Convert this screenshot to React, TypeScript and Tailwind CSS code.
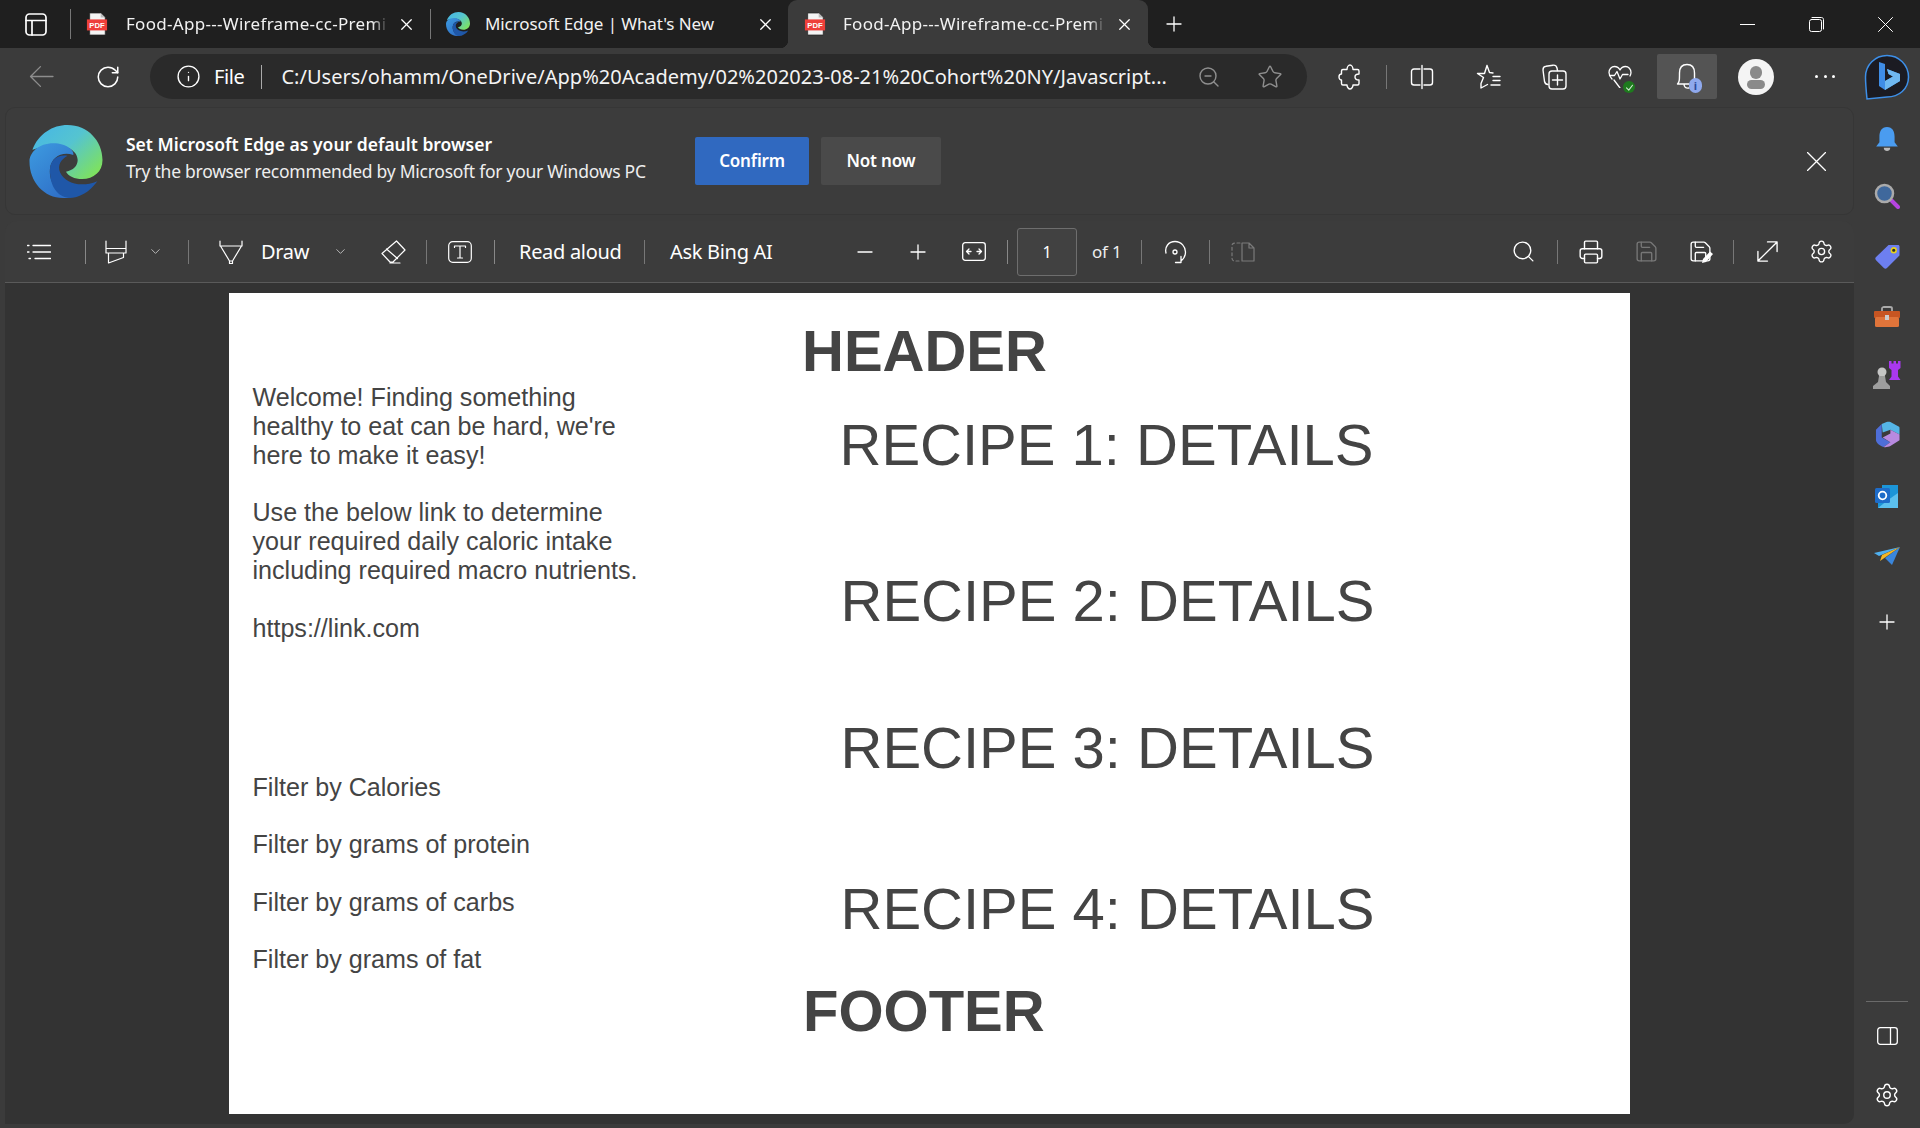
import React from "react";
import { Info, Minus, Plus, Printer, RotateCw, Save, Search, Settings, Star, X, ZoomOut, ChevronDown } from "lucide-react";

type P = { className?: string; children?: React.ReactNode; vb?: string; sw?: number };
const Svg = ({ className, children, vb = "0 0 24 24", sw = 1.4 }: P) => (
  <svg viewBox={vb} className={className} fill="none" stroke="currentColor" strokeWidth={sw} strokeLinecap="round" strokeLinejoin="round">
    {children}
  </svg>
);

const EdgeLogo = ({ className, id }: { className?: string; id: string }) => (
  <svg viewBox="0 0 100 100" className={className}>
    <defs>
      <linearGradient id={id + "a"} x1="0" y1="0" x2="1" y2="0.8">
        <stop offset="0" stopColor="#45b5e8" />
        <stop offset="0.5" stopColor="#55c4d0" />
        <stop offset="1" stopColor="#7fe25c" />
      </linearGradient>
      <linearGradient id={id + "b"} x1="0" y1="0" x2="0.7" y2="1">
        <stop offset="0" stopColor="#3d9be0" />
        <stop offset="1" stopColor="#2f70c8" />
      </linearGradient>
    </defs>
    <path d="M4 34C12 12 32 0 52 0C80 0 100 22 100 48C100 64 88 74 72 74C62 74 53 70 50 64C60 62 66 56 66 48C66 36 52 28 38 28C22 28 10 32 4 34Z" fill={`url(#${id}a)`} />
    <path d="M0 50C0 38 12 25 33 25C50 25 62 35 60 41C44 36 30 44 28 60C26 80 40 95 58 100C52 100 50 100 46 100C20 100 0 78 0 50Z" fill={`url(#${id}b)`} />
    <path d="M28 62C28 48 38 40 52 42C43 47 38 55 42 65C48 78 68 87 93 77C82 92 68 100 54 100C38 98 28 84 28 62Z" fill="#1f57a8" />
  </svg>
);

const PdfIcon = ({ className }: { className?: string }) => (
  <svg viewBox="0 0 24 26" className={className}>
    <path d="M4 1H16L21 6V25H4Z" fill="#f4f4f4" stroke="#222" strokeWidth="0.8" />
    <path d="M16 1V6H21Z" fill="#bbb" />
    <rect x="1" y="8" width="22" height="12" fill="#ee3f3a" />
    <text x="12" y="17.3" textAnchor="middle" fontSize="8.4" fontWeight="700" fill="#fff" fontFamily="'Liberation Sans', sans-serif">PDF</text>
  </svg>
);

const Sep = ({ className = "" }: { className?: string }) => <div className={`w-px bg-[#777] shrink-0 ${className}`} />;

const TabTitle = ({ className = "" }: { className?: string }) => (
  <span className={`w-[262px] whitespace-nowrap text-[17px] leading-[24px] tracking-[0.3px] text-[#f2f2f2] [mask-image:linear-gradient(to_right,black_94%,transparent)] ${className}`}>
    Food-App---Wireframe-cc-Premi
  </span>
);

function TabStrip() {
  return (
    <div className="h-12 bg-[#1f1f1f] flex items-center shrink-0 text-white">
      <Svg className="ml-[25px] w-[22px] h-[23px] shrink-0" vb="0 0 22 23" sw={1.7}>
        <rect x="1" y="1" width="20" height="21" rx="3.500" />
        <path d="M1 7.500H21M7 7.500V22" />
      </Svg>
      <Sep className="ml-[23px] h-[30px]" />
      <PdfIcon className="ml-[15px] w-[22px] h-[24px] shrink-0" />
      <TabTitle className="ml-[18px]" />
      <X className="ml-[9px] w-[19px] h-[19px] shrink-0" strokeWidth={1.6} />
      <Sep className="ml-[14px] h-[30px]" />
      <EdgeLogo id="t2" className="ml-[15px] w-[24px] h-[24px] shrink-0" />
      <span className="ml-[15px] w-[230px] whitespace-nowrap text-[17px] leading-[24px] tracking-[-0.1px] text-[#f2f2f2]">Microsoft Edge | What's New</span>
      <X className="ml-[41px] w-[19px] h-[19px] shrink-0" strokeWidth={1.6} />
      <div className="relative ml-[13px] w-[360px] h-12 bg-[#3b3b3b] rounded-t-[9px] flex items-center shrink-0">
        <div className="absolute left-[-8px] bottom-0 w-[8px] h-[8px] bg-[radial-gradient(circle_at_0_0,#1f1f1f_8px,#3b3b3b_8.5px)]" />
        <div className="absolute right-[-8px] bottom-0 w-[8px] h-[8px] bg-[radial-gradient(circle_at_100%_0,#1f1f1f_8px,#3b3b3b_8.5px)]" />
        <PdfIcon className="ml-[16px] w-[22px] h-[24px] shrink-0" />
        <TabTitle className="ml-[17px]" />
        <X className="ml-[10px] w-[19px] h-[19px] shrink-0" strokeWidth={1.6} />
      </div>
      <Plus className="ml-[14px] w-[24px] h-[24px] shrink-0" strokeWidth={1.3} />
      <div className="flex-1" />
      <div className="w-[15px] h-px bg-white shrink-0" />
      <Svg className="ml-[54px] w-[15px] h-[15px] shrink-0" vb="0 0 15 15" sw={1}>
        <rect x="0.5" y="2.5" width="12" height="12" rx="2" />
        <path d="M3 0.5H12.5C13.6 0.5 14.5 1.4 14.5 2.5V12" />
      </Svg>
      <Svg className="ml-[54px] mr-[27px] w-[15px] h-[15px] shrink-0" vb="0 0 15 15" sw={1}>
        <path d="M0.5 0.5L14.5 14.5M14.5 0.5L0.5 14.5" />
      </Svg>
    </div>
  );
}

function AddressRow() {
  return (
    <div className="h-[59px] shrink-0 flex items-start pt-[6px] text-white">
      <Svg className="ml-[29px] mt-[10px] w-[25px] h-[25px] shrink-0 text-[#8d8d8d]" sw={1.3}>
        <path d="M23 12H1.5M11 2.5L1.5 12L11 21.5" />
      </Svg>
      <RotateCw className="ml-[41px] mt-[10px] w-[26px] h-[26px] shrink-0" strokeWidth={1.4} />
      <div className="ml-[29px] w-[1157px] h-[45px] rounded-full bg-[#2a2a2a] flex items-center shrink-0">
        <Info className="ml-[26px] w-[25px] h-[25px] shrink-0" strokeWidth={1.3} />
        <span className="ml-[13px] text-[20px] leading-[28px] tracking-[-0.4px]">File</span>
        <Sep className="ml-[17px] h-[24px] bg-[#aaa]" />
        <span className="ml-[19px] w-[884px] whitespace-nowrap text-[20px] leading-[28px] tracking-[0.02px] text-[#f4f4f4]">C:/Users/ohamm/OneDrive/App%20Academy/02%202023-08-21%20Cohort%20NY/Javascript...</span>
        <ZoomOut className="ml-[32px] w-[24px] h-[24px] shrink-0 text-[#8f8f8f]" strokeWidth={1.4} />
        <Star className="ml-[36px] w-[26px] h-[26px] shrink-0 text-[#8f8f8f]" strokeWidth={1.3} />
      </div>
      <Svg className="ml-[31px] mt-[10px] w-[24px] h-[26px] shrink-0" vb="0 0 24 26" sw={1.4}>
        <path d="M9 5.500C9 3 10.500 1 12 1C13.500 1 15 3 15 5.500H19.500C20.500 5.500 21 6 21 7V10C18.500 10 17 11 17 13C17 15 18.500 16 21 16V19.500C21 20.500 20.500 21 19.500 21H15C15 23 13.500 25 12 25C10.500 25 9 23 9 21H5C4 21 3.500 20.500 3.500 19.500V16C2 16 1 14.500 1 13C1 11.500 2 10 3.500 10V7C3.500 6 4 5.500 5 5.500Z" />
      </Svg>
      <Sep className="ml-[24px] mt-[11px] h-[24px] bg-[#666]" />
      <Svg className="ml-[23px] mt-[10px] w-[24px] h-[26px] shrink-0" vb="0 0 24 26">
        <path d="M10 5H4C2.5 5 1.5 6 1.5 7.5V18.500C1.500 20 2.500 21 4 21H10M14 5H20C21.500 5 22.500 6 22.500 7.500V18.500C22.500 20 21.500 21 20 21H14M12 1.500V24.500" />
      </Svg>
      <Svg className="ml-[42px] mt-[10px] w-[25px] h-[26px] shrink-0" vb="0 0 25 26">
        <path d="M11 1.500L13.500 8.500L17 9M5 19.500L7.500 13.500L1.500 9.500H8.500L11 1.500M5 19.500V24L11.500 20.500" />
        <path d="M17 12.500H24M17 16.500H24M15 21H24" />
      </Svg>
      <Svg className="ml-[41px] mt-[10px] w-[25px] h-[26px] shrink-0" vb="0 0 25 26">
        <path d="M6 20.500C4 20.500 3 19.500 2.500 17.500L1 6C1 4 2 2.500 4 2.300L11 1.200C13 1 14.500 2 15 4L15.500 6.500" />
        <rect x="7" y="7" width="17" height="18" rx="3" />
        <path d="M15.500 11V21M10.500 16H20.500" />
      </Svg>
      <div className="relative ml-[41px] mt-[10px] w-[24px] h-[26px] shrink-0">
        <Svg className="w-[24px] h-[24px]" sw={1.3}>
          <path d="M4 15C2 13 1 11.500 1 8.500C1 5 3.500 2.500 6.500 2.500C9 2.500 11 4 12 6C13 4 15 2.500 17.500 2.500C20.500 2.500 23 5 23 8.500C23 10 22.500 11 22 12M1.500 11.500H6.500L9 7.500L12 15L14.500 10.500H20M6 16L12 24" />
        </Svg>
        <span className="absolute right-[-3px] bottom-[-3px] w-[12px] h-[12px] rounded-full bg-[#1e7a1e] flex items-center justify-center">
          <Svg className="w-[9px] h-[9px] text-[#cfe8cf]" sw={3}><path d="M4 13L10 19L20 6" /></Svg>
        </span>
      </div>
      <div className="ml-[25px] w-[60px] h-[45px] rounded-[2px] bg-[#545454] flex items-center justify-center shrink-0">
        <div className="relative w-[22px] h-[27px]">
          <Svg className="w-[22px] h-[27px]" vb="0 0 22 27" sw={1.4}>
            <path d="M1.500 21C3.500 19 3.500 17 3.500 10C3.500 5 6 1.500 11 1.500C16 1.500 18.500 5 18.500 10V16M1.500 21H13M8 21C8 24.500 10 25.500 13 25" />
          </Svg>
          <span className="absolute left-[13px] top-[15px] w-[13px] h-[15px] rounded-full bg-[#8fa9ee] text-[#2c4a9c] text-[11px] leading-[15px] font-bold text-center">i</span>
        </div>
      </div>
      <div className="ml-[21px] mt-[5px] w-[36px] h-[36px] rounded-full bg-[#f4f4f4] flex flex-col items-center justify-center shrink-0">
        <div className="w-[12px] h-[13px] rounded-full bg-[#8a8a8a]" />
        <div className="mt-[1px] w-[18px] h-[9px] rounded-[5px] bg-[#8a8a8a]" />
      </div>
      <div className="ml-[41px] mt-[21px] w-[20px] flex justify-between shrink-0">
        <div className="w-[3px] h-[3px] rounded-full bg-white" />
        <div className="w-[3px] h-[3px] rounded-full bg-white" />
        <div className="w-[3px] h-[3px] rounded-full bg-white" />
      </div>
    </div>
  );
}

function InfoBar() {
  return (
    <div className="ml-[5px] h-[108px] w-[1849px] shrink-0 rounded-[10px] border border-[#363636] bg-[#3c3c3c] flex items-center text-white">
      <EdgeLogo id="main" className="ml-[23px] w-[74px] h-[73px] shrink-0" />
      <div className="ml-[23px] w-[569px] shrink-0 mb-[7px]">
        <div className="text-[17.5px] leading-[27px] font-semibold whitespace-nowrap">Set Microsoft Edge as your default browser</div>
        <div className="text-[17.5px] leading-[27px] tracking-[-0.26px] text-[#eee] whitespace-nowrap">Try the browser recommended by Microsoft for your Windows PC</div>
      </div>
      <button className="w-[114px] h-[48px] rounded-[2px] bg-[#3069c0] text-[17px] font-semibold tracking-[-0.2px] text-white shrink-0">Confirm</button>
      <button className="ml-[12px] w-[120px] h-[48px] rounded-[2px] bg-[#4a4a4a] text-[17px] font-semibold tracking-[-0.2px] text-white shrink-0">Not now</button>
      <div className="flex-1" />
      <Svg className="mr-[27px] w-[19px] h-[19px] shrink-0" vb="0 0 19 19" sw={1.3}>
        <path d="M0.500 0.500L18.500 18.500M18.500 0.500L0.500 18.500" />
      </Svg>
    </div>
  );
}

function PdfBar() {
  return (
    <div className="ml-[5px] mt-[6px] h-[62px] w-[1849px] shrink-0 rounded-t-[12px] border-b border-[#5a5a5a] bg-[#3c3c3c] flex items-center text-white">
      <Svg className="ml-[22px] w-[24px] h-[16px] shrink-0" vb="0 0 24 16" sw={1.3}>
        <path d="M6 1.500H23.500M6 8H23.500M8 14.500H23.500M0.500 1.500H2M0.500 8H2M2 14.500H3.500" />
      </Svg>
      <Sep className="ml-[34px] h-[24px] bg-[#888]" />
      <Svg className="ml-[19px] w-[22px] h-[24px] shrink-0" vb="0 0 22 24" sw={1.2}>
        <path d="M1 1V8.500H21V1M1 8.500V13H21V8.500M3.500 13V23L18.500 17.500V13" />
      </Svg>
      <ChevronDown className="ml-[21px] w-[15px] h-[15px] shrink-0 text-[#ddd]" strokeWidth={1.2} />
      <Sep className="ml-[25px] h-[24px] bg-[#666]" />
      <Svg className="ml-[30px] w-[24px] h-[24px] shrink-0" vb="0 0 24 24" sw={1.2}>
        <path d="M1 1V6H23V1M1.500 6L10.500 21H13.500L22.500 6M10.500 21V23.500H13.500V21" />
      </Svg>
      <span className="ml-[18px] w-[48px] text-[20px] leading-[26px] tracking-[-0.3px] whitespace-nowrap">Draw</span>
      <ChevronDown className="ml-[24px] w-[15px] h-[15px] shrink-0 text-[#ddd]" strokeWidth={1.2} />
      <Svg className="ml-[33px] w-[25px] h-[24px] shrink-0" vb="0 0 25 24" sw={1.2}>
        <path d="M15.500 1L24 10L12 22H9L1 13.500ZM5.500 9L16.500 18.500M9 23H19" />
      </Svg>
      <Sep className="ml-[20px] h-[24px] bg-[#666]" />
      <Svg className="ml-[21px] w-[24px] h-[22px] shrink-0" vb="0 0 24 22" sw={1.2}>
        <rect x="0.700" y="0.700" width="22.600" height="20.600" rx="4" />
        <path d="M6.500 6.500V5H17.500V6.500M12 5V17M9.500 17H14.500" />
      </Svg>
      <Sep className="ml-[22px] h-[24px] bg-[#888]" />
      <span className="ml-[24px] w-[102px] text-[20px] leading-[26px] tracking-[-0.3px] whitespace-nowrap">Read aloud</span>
      <Sep className="ml-[23px] h-[24px] bg-[#666]" />
      <span className="ml-[25px] w-[104px] text-[20px] leading-[26px] tracking-[-0.3px] whitespace-nowrap">Ask Bing AI</span>
      <Minus className="ml-[79px] w-[24px] h-[24px] shrink-0" strokeWidth={1.3} />
      <Plus className="ml-[29px] w-[24px] h-[24px] shrink-0" strokeWidth={1.3} />
      <Svg className="ml-[32px] w-[24px] h-[19px] shrink-0" vb="0 0 24 19" sw={1.3}>
        <rect x="0.700" y="0.700" width="22.600" height="17.600" rx="2.500" />
        <path d="M4.500 9.500H9M15 9.500H19.500M7 7L4.500 9.500L7 12M17 7L19.500 9.500L17 12" />
      </Svg>
      <Sep className="ml-[21px] h-[24px] bg-[#888]" />
      <div className="ml-[9px] w-[60px] h-[48px] rounded-[3px] border border-[#6e6e6e] bg-[#414141] flex items-center justify-center text-[16px] shrink-0">1</div>
      <span className="ml-[15px] w-[34px] text-[17px] leading-[24px] tracking-[-0.2px] whitespace-nowrap text-[#eee]">of 1</span>
      <Sep className="ml-[15px] h-[24px] bg-[#666]" />
      <Svg className="ml-[21px] w-[24px] h-[24px] shrink-0" vb="0 0 24 24" sw={1.3}>
        <path d="M3 13C1.500 7 5.500 1.500 12 1.500C18.500 1.500 22.500 7 22.500 12C22.500 15.500 20.500 19 18 21M18 16.500V22.500H12.500" />
        <circle cx="12" cy="12" r="2" />
      </Svg>
      <Sep className="ml-[22px] h-[24px] bg-[#777]" />
      <Svg className="ml-[21px] w-[24px] h-[20px] shrink-0 text-[#7a7a7a]" vb="0 0 24 20" sw={1.2}>
        <path d="M9 1H4C2 1 1 2 1 4V16C1 18 2 19 4 19H9" strokeDasharray="3 2.500" />
        <path d="M11 1H18L23 6V19H11ZM18 1V6H23" />
      </Svg>
      <div className="flex-1" />
      <Search className="w-[25px] h-[25px] shrink-0 translate-x-[1px]" strokeWidth={1.3} />
      <Sep className="ml-[22px] h-[24px] bg-[#777]" />
      <Printer className="ml-[20px] w-[26px] h-[26px] shrink-0" strokeWidth={1.3} />
      <Save className="ml-[30px] w-[25px] h-[25px] shrink-0 text-[#777]" strokeWidth={1.3} />
      <div className="relative ml-[29px] w-[24px] h-[25px] shrink-0">
        <Save className="w-[25px] h-[25px]" strokeWidth={1.3} />
        <Svg className="absolute right-[-2px] bottom-0 w-[14px] h-[14px]" vb="0 0 14 14" sw={0}>
          <path d="M2 13L3 9L10 1.500L13 4L6 12Z" fill="#fff" />
        </Svg>
      </div>
      <Sep className="ml-[21px] h-[24px] bg-[#777]" />
      <Svg className="ml-[22px] w-[23px] h-[23px] shrink-0" sw={1.4}>
        <path d="M22 2L2 22M12 2H22V12M2 12V22H12" />
      </Svg>
      <Settings className="ml-[30px] mr-[20px] w-[25px] h-[25px] shrink-0" strokeWidth={1.3} />
    </div>
  );
}

const txt = "text-[#444] font-['Liberation_Sans',Arial,sans-serif]";
const Recipe = ({ n, className }: { n: number; className: string }) => (
  <div className={`text-[58px] leading-[64px] whitespace-nowrap ${className}`}>RECIPE {n}: DETAILS</div>
);

function PdfPage() {
  return (
    <div className={`ml-[224px] mt-[10px] w-[1401px] h-[821px] bg-white shrink-0 flex flex-col ${txt}`}>
      <div className="ml-[573px] mt-[26px] text-[58px] leading-[64px] font-bold">HEADER</div>
      <div className="flex">
        <div className="ml-[23.5px] w-[588px] text-[25.1px] leading-[29px]">
          <p>Welcome! Finding something<br />healthy to eat can be hard, we're<br />here to make it easy!</p>
          <p className="mt-[28px]">Use the below link to determine<br />your required daily caloric intake<br />including required macro nutrients.</p>
          <p className="mt-[29px]">https://link.com</p>
          <p className="mt-[130px]">Filter by Calories</p>
          <p className="mt-[28px]">Filter by grams of protein</p>
          <p className="mt-[29px]">Filter by grams of carbs</p>
          <p className="mt-[28px]">Filter by grams of fat</p>
        </div>
        <div>
          <Recipe n={1} className="mt-[30px] -ml-[1px]" />
          <Recipe n={2} className="mt-[92px]" />
          <Recipe n={3} className="mt-[83px]" />
          <Recipe n={4} className="mt-[97px]" />
        </div>
      </div>
      <div className="ml-[574px] mt-[5px] text-[58px] leading-[64px] font-bold">FOOTER</div>
    </div>
  );
}

function Sidebar() {
  return (
    <div className="w-[65px] shrink-0 flex flex-col items-center text-white pr-[1px]">
      <svg viewBox="0 0 46 46" className="mt-[6px] w-[46px] h-[46px] shrink-0">
        <path d="M23 1.500C35 1.500 44.500 11 44.500 23C44.500 35 35 43 23 43L3 45C2 35 1.500 30 1.500 23C1.500 11 11 1.500 23 1.500Z" fill="#1b1b22" stroke="#3d8fe8" strokeWidth="1.500" />
        <path d="M15 8L21 10V27L29 22.500L24.500 20L23 15L36 20V27L21 36L15 32Z" fill="#3f8de6" />
        <path d="M21 27L29 22.500L24.500 20L23 15L36 20V27L21 36Z" fill="#6fb8f0" />
      </svg>
      <svg viewBox="0 0 24 24" className="mt-[26px] w-[26px] h-[26px] shrink-0">
        <path d="M12 1C7 1 5 5 5 10V15L2 19H22L19 15V10C19 5 17 1 12 1Z" fill="#4a9cf0" />
        <path d="M9 20H15C15 24 9 24 9 20Z" fill="#bbb" />
      </svg>
      <svg viewBox="0 0 26 26" className="mt-[31px] w-[26px] h-[26px] shrink-0">
        <path d="M17 17L24 24" stroke="#b544e0" strokeWidth="4" strokeLinecap="round" />
        <circle cx="10.500" cy="10.500" r="8.500" fill="#3f689c" stroke="#aaa" strokeWidth="2.500" />
      </svg>
      <svg viewBox="0 0 24 24" className="mt-[35px] w-[25px] h-[25px] shrink-0">
        <path d="M13 1H22C23 1 23.500 1.500 23.500 2.500V11L11.500 23C10.500 24 9.500 24 8.500 23L1 15.500C0 14.500 0 13.500 1 12.500Z" fill="#6d7ff0" />
        <circle cx="18" cy="6" r="2.300" fill="#2a2a2a" stroke="#e8d21c" strokeWidth="1.500" />
      </svg>
      <svg viewBox="0 0 28 22" className="mt-[37px] w-[28px] h-[22px] shrink-0">
        <path d="M9 5V2.500C9 1.500 10 1 11 1H17C18 1 19 1.500 19 2.500V5" fill="none" stroke="#aaa" strokeWidth="1.800" />
        <rect x="1" y="5" width="26" height="7" rx="1" fill="#c75522" />
        <rect x="2" y="11" width="24" height="10" rx="1.500" fill="#e0743a" />
        <rect x="12" y="9" width="4" height="5" fill="#ccc" />
      </svg>
      <svg viewBox="0 0 28 28" className="mt-[33px] w-[28px] h-[28px] shrink-0">
        <path d="M16 0H18.500V2.500H20.500V0H23V2.500H25V0H27.500V7L25 9V15.500L27.500 19H16L18.500 15.500V9L16 7Z" fill="#a938f0" />
        <circle cx="9" cy="11" r="4.500" fill="#c5c5c5" />
        <path d="M6 15H12L13 21L17 25V28H0V25L5 21Z" fill="#9e9e9e" />
      </svg>
      <svg viewBox="0 0 26 28" className="mt-[32px] w-[25px] h-[27px] shrink-0">
        <path d="M7 3L12 1C13.500 0.500 15 0.500 16 1L25 6C25.500 6.500 25.500 7 25.500 8V14L16 9L8 12Z" fill="#55b5e6" />
        <path d="M1 9L7 3V17L16 22L9 27C7 27 1 23 1 20Z" fill="#4e6ed8" />
        <path d="M8 17L16 13V9L25.500 14V20L16 26C14 27 11 27.500 9 27L16 22Z" fill="#b88ae0" />
      </svg>
      <svg viewBox="0 0 24 24" className="mt-[36px] w-[24px] h-[24px] shrink-0">
        <path d="M7 1H23V24H3V19H7Z" fill="#1c95d8" />
        <path d="M13 16L23 9V24H3Z" fill="#5cc0ee" />
        <rect x="0" y="4" width="15" height="15" rx="1.500" fill="#1e6cc9" />
        <circle cx="7.500" cy="11.500" r="3.800" fill="none" stroke="#fff" strokeWidth="1.800" />
      </svg>
      <svg viewBox="0 0 26 18" className="mt-[39px] w-[26px] h-[18px] shrink-0">
        <path d="M0 6L26 0L5 9Z" fill="#4fb0f0" />
        <path d="M26 0L18 18L11 11Z" fill="#3a86dc" />
        <path d="M26 0L8 8L6 14Z" fill="#f5b724" />
      </svg>
      <Plus className="mt-[45px] w-[24px] h-[24px] shrink-0" strokeWidth={1.3} />
      <div className="flex-1" />
      <div className="w-[42px] h-px bg-[#6a6a6a] shrink-0" />
      <Svg className="mt-[25px] w-[21px] h-[18px] shrink-0" vb="0 0 21 18" sw={1.3}>
        <rect x="0.700" y="0.700" width="19.600" height="16.600" rx="2.500" />
        <path d="M13.500 0.700V17.300" />
      </Svg>
      <Settings className="mt-[37px] mb-[20px] w-[26px] h-[26px] shrink-0" strokeWidth={1.3} />
    </div>
  );
}

export default function App() {
  return (
    <div className="w-[1920px] h-[1128px] overflow-hidden bg-[#3b3b3b] flex flex-col font-['Noto_Sans','Open_Sans',sans-serif]">
      <TabStrip />
      <div className="flex flex-1 min-h-0">
        <div className="w-[1855px] shrink-0 flex flex-col">
          <AddressRow />
          <InfoBar />
          <PdfBar />
          <div className="ml-[5px] w-[1849px] h-[841px] bg-[#333] rounded-br-[10px] shrink-0 overflow-hidden">
            <PdfPage />
          </div>
        </div>
        <Sidebar />
      </div>
    </div>
  );
}
